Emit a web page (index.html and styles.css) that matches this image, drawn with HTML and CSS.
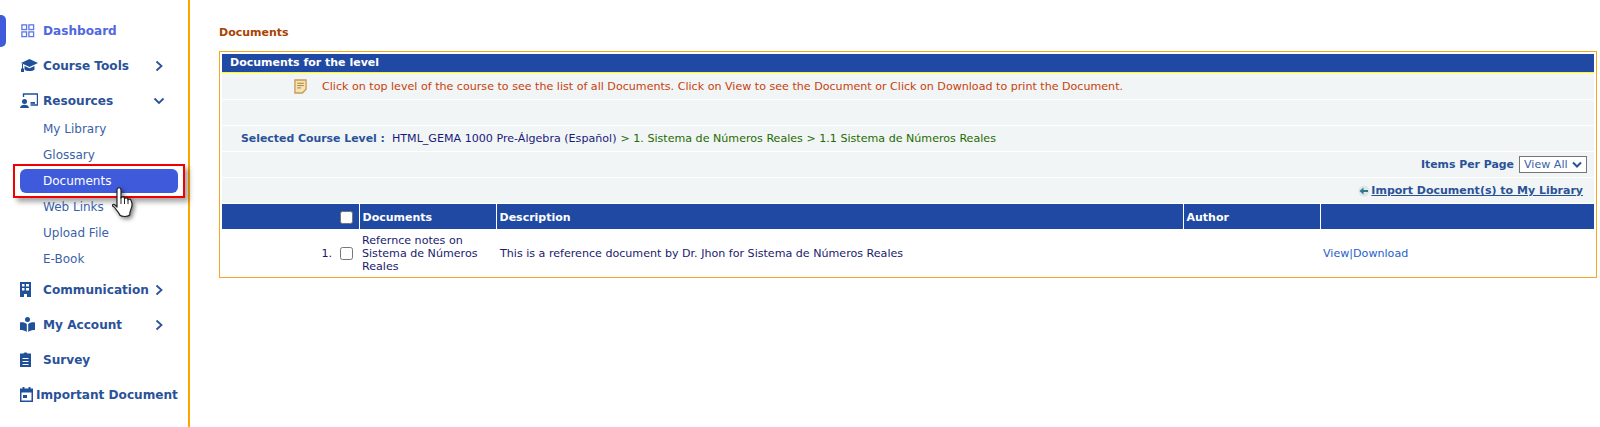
FILE: index.html
```html
<!DOCTYPE html>
<html lang="en">
<head>
  <meta charset="UTF-8">
  <meta name="viewport" content="width=device-width, initial-scale=1.0">
  <title>Documents</title>
  <link rel="stylesheet" href="styles.css">
</head>
<body>
  <div class="layout">
    <!-- Sidebar -->
    <nav class="sidebar">
      <div class="nav-item active-top">
        <span class="marker"></span>
        <svg class="nav-icon" viewBox="0 0 16 16"><g fill="none" stroke="#5f78e6" stroke-width="1.4"><rect x="2" y="2" width="5" height="5"/><rect x="9.5" y="2" width="5" height="5"/><rect x="2" y="9.5" width="5" height="5"/><rect x="9.5" y="9.5" width="5" height="5"/></g></svg>
        <span class="nav-label">Dashboard</span>
      </div>
      <div class="nav-item">
        <svg class="nav-icon wide" viewBox="0 0 18 15"><path fill="#20509a" d="M9.500 1 1 5l8.500 4L18 5z"/><path fill="#20509a" d="M4.500 8v3.500c1.500 2 8.500 2 10 0V8l-5 2.300z"/><path fill="none" stroke="#20509a" d="M2.500 6v5"/><rect x="1" y="10.500" width="3" height="3.500" fill="#20509a"/></svg>
        <span class="nav-label">Course Tools</span>
        <svg class="chevron" viewBox="0 0 12 12"><path d="M3.500 1.500 8.500 6l-5 4.500"/></svg>
      </div>
      <div class="nav-item">
        <svg class="nav-icon wide" viewBox="0 0 18 15"><circle cx="4.500" cy="8.500" r="2.500" fill="#20509a"/><path fill="#20509a" d="M0 15c0-4.500 9-4.500 9 0z"/><path fill="none" stroke="#20509a" stroke-width="1.400" d="M3.500 4V1h14v11h-7"/><rect x="10.500" y="9" width="4.500" height="1.800" fill="#20509a"/></svg>
        <span class="nav-label">Resources</span>
        <svg class="chevron down" viewBox="0 0 12 12"><path d="M1.500 3.500 6 8l4.500-4.500"/></svg>
      </div>
      <ul class="sub-menu">
        <li>My Library</li>
        <li>Glossary</li>
        <li class="current">
          <span class="pill">Documents</span>
          <span class="red-box"></span>
          <svg class="hand" viewBox="0 0 22 32"><path fill="#fff" stroke="#222" stroke-width="1.200" stroke-linejoin="round" d="M5 3C5 0 9 0 9 3V11c0-1.500 3.500-1.500 3.500 0v1c0-1.500 3.500-1.500 3.500 0v1c0-1.300 3-1.300 3 .5 1.500 3 1.500 6-.3 9.500-.6 1.500-1 3-1 5-2 2-8 2-10 0-.5-2.500-3.500-5-5.500-8C-.5 19 .5 16.500 2.500 17.500L5 20z"/><path fill="none" stroke="#222" d="M9 10v7M12.500 11v6M16 12v5"/></svg>
        </li>
        <li>Web Links</li>
        <li>Upload File</li>
        <li>E-Book</li>
      </ul>
      <div class="nav-item">
        <svg class="nav-icon" viewBox="0 0 15 15"><path fill="#20509a" fill-rule="evenodd" d="M0 0h11v15H7v-3H4v3H0zM2 2v2.500h2.500V2zm4 0v2.500h3V2zM2 6v2.500h2.500V6zm4 0v2.500h3V6z"/></svg>
        <span class="nav-label">Communication</span>
        <svg class="chevron" viewBox="0 0 12 12"><path d="M3.500 1.500 8.500 6l-5 4.500"/></svg>
      </div>
      <div class="nav-item">
        <svg class="nav-icon" viewBox="0 0 15 15"><circle cx="7.500" cy="2.500" r="2.500" fill="#20509a"/><path fill="#20509a" d="M0 5.500c2.500-.5 5 0 6.800 1.500v8C5 13.500 2.500 13 0 13zM15 5.500c-2.500-.5-5 0-6.800 1.500v8c1.800-1.500 4.300-2 6.800-2z"/></svg>
        <span class="nav-label">My Account</span>
        <svg class="chevron" viewBox="0 0 12 12"><path d="M3.500 1.500 8.500 6l-5 4.500"/></svg>
      </div>
      <div class="nav-item">
        <svg class="nav-icon" viewBox="0 0 15 15"><path fill="#20509a" fill-rule="evenodd" d="M3.500 1.500C3.500 0 7.500 0 7.500 1.500H11V15H0V1.500zM2.500 6v1h6V6zm0 3v1h6V9zm0 3v1h6v-1z"/></svg>
        <span class="nav-label">Survey</span>
      </div>
      <div class="nav-item important">
        <svg class="nav-icon narrow" viewBox="0 0 13 15"><path fill="#20509a" fill-rule="evenodd" d="M2.500 0h2v1.500h4V0h2v1.500H13V15H0V1.500h2.500zM1.500 5.500V13.500h10V5.500zM3 8h4v3H3z"/></svg>
        <span class="nav-label">Important Document</span>
      </div>
    </nav>

    <!-- Main content -->
    <main class="content">
      <h1 class="page-title">Documents</h1>
      <div class="panel">
        <div class="panel-head">Documents for the level</div>
        <div class="info-row note">
          <svg class="note-icon" viewBox="0 0 14 16"><path fill="#f6e3b4" stroke="#c79a55" stroke-width="1.400" d="M1 1h12v10l-4 4H1z"/><path fill="none" stroke="#a8782f" d="M3.500 4.500h7M3.500 7h7M3.500 9.500h4"/></svg>
          <span>Click on top level of the course to see the list of all Documents. Click on View to see the Document or Click on Download to print the Document.</span>
        </div>
        <div class="info-row"></div>
        <div class="info-row level">
          <b>Selected Course Level :</b>
          <span class="crumb-first">HTML_GEMA 1000 Pre-Álgebra (Español)</span>
          <span class="crumb">&gt; 1. Sistema de Números Reales &gt; 1.1 Sistema de Números Reales</span>
        </div>
        <div class="info-row right">
          <b>Items Per Page</b>
          <span class="select-box">View All
            <svg viewBox="0 0 10 8"><path d="M1 1.500 5 5.500l4-4"/></svg>
          </span>
        </div>
        <div class="info-row right import">
          <svg class="import-icon" viewBox="0 0 12 12"><circle cx="6" cy="6" r="5.500" fill="#dfe6ea"/><path fill="#2a7a8c" d="M1.500 6 5.500 2.500V5H10v2H5.500v2.500z"/></svg>
          <a class="import-link">Import Document(s) to My Library</a>
        </div>
        <table class="doc-table">
          <tr>
            <th class="col-check"><span class="check head-check"></span></th>
            <th class="col-doc">Documents</th>
            <th class="col-desc">Description</th>
            <th class="col-author">Author</th>
            <th></th>
          </tr>
          <tr>
            <td class="col-check"><span class="row-num">1.</span><span class="check"></span></td>
            <td class="doc-name">Refernce notes on Sistema de Números Reales</td>
            <td class="doc-desc">This is a reference document by Dr. Jhon for Sistema de Números Reales</td>
            <td></td>
            <td class="links"><a>View</a>|<a>Download</a></td>
          </tr>
        </table>
      </div>
    </main>
  </div>
</body>
</html>
```

FILE: styles.css
```css
* {
  box-sizing: border-box;
}
body {
  margin: 0;
  background-color: #fff;
  font-family: "DejaVu Sans", Verdana, sans-serif;
  font-size: 11px;
  height: 427px;
  overflow: hidden;
}
.layout {
  display: flex;
  height: 427px;
}

/* Sidebar */
.sidebar {
  width: 190px;
  flex: none;
  border-right: 2px solid #ffa500;
  padding-top: 13px;
}
.nav-item {
  display: flex;
  align-items: center;
  height: 35px;
  padding-left: 20px;
  position: relative;
  color: #2a5298;
  font-size: 12.100px;
  font-weight: bold;
}
.active-top {
  color: #4f67e0;
}
.marker {
  position: absolute;
  left: 0;
  top: 2px;
  width: 6px;
  height: 32px;
  background: #3f5bdc;
  border-radius: 0 5px 5px 0;
}
.nav-icon {
  width: 15px;
  height: 15px;
  flex: none;
  margin-right: 8px;
}
.nav-icon.wide {
  width: 18px;
  margin-right: 5px;
}
.nav-icon.narrow {
  width: 13px;
  margin-right: 3px;
}
.nav-label {
  white-space: nowrap;
}
.chevron {
  width: 12px;
  height: 12px;
  position: absolute;
  left: 153px;
  fill: none;
  stroke: #2a5298;
  stroke-width: 1.800;
}
.sub-menu {
  list-style: none;
  margin: -2px 0 0;
  padding: 0;
}
.sub-menu li {
  position: relative;
  height: 26px;
  line-height: 26px;
  padding-left: 43px;
  color: #3a5fa8;
  font-size: 12px;
}
.sub-menu li.current {
  color: #fff;
}
.pill {
  position: absolute;
  left: 20px;
  top: 1px;
  width: 158px;
  height: 24px;
  line-height: 24px;
  padding-left: 23px;
  background: #3f5bdc;
  border-radius: 6px;
}
.red-box {
  position: absolute;
  left: 13px;
  top: -4px;
  width: 172px;
  height: 34px;
  border: 2px solid #f00000;
  box-shadow: 4px 4px 5px rgba(0, 0, 0, 0.35);
}
.hand {
  position: absolute;
  left: 112px;
  top: 19px;
  width: 22px;
  height: 32px;
  filter: drop-shadow(2px 2px 2px rgba(0, 0, 0, 0.5));
}

/* Main */
.content {
  flex: 1;
  padding: 0 3px 0 29px;
}
.page-title {
  margin: 26px 0 11px;
  font-size: 11px;
  line-height: 14px;
  color: #a84300;
}
.panel {
  border: 1px solid #f5a623;
  padding: 2px;
  height: 227px;
}
.panel-head {
  height: 19px;
  line-height: 18px;
  padding-left: 8px;
  background: #1f49a2;
  border-bottom: 1px solid #ffff00;
  color: #fff;
  font-weight: bold;
  font-size: 11px;
}
.info-row {
  display: flex;
  align-items: center;
  height: 25px;
  margin-bottom: 1px;
  background: #f1f5f6;
  font-size: 11.100px;
}
.info-row b {
  font-size: 10.900px;
}
.note {
  height: 26px;
  color: #c8410b;
  padding-left: 72px;
}
.note-icon {
  width: 13px;
  height: 15px;
  margin-right: 15px;
}
.level {
  padding-left: 19px;
  color: #1a1a7a;
}
.level b {
  color: #2a5298;
  margin-right: 7px;
}
.crumb-first {
  margin-right: 4px;
}
.crumb {
  color: #1f6b00;
}
.right {
  justify-content: flex-end;
  padding-right: 7px;
}
.right b {
  color: #2a5298;
  margin-right: 5px;
}
.select-box {
  display: flex;
  align-items: center;
  justify-content: space-between;
  width: 68px;
  height: 17px;
  padding: 0 4px;
  border: 1px solid #767676;
  background: #fff;
  color: #3a5fa8;
}
.select-box svg {
  width: 10px;
  height: 8px;
  fill: none;
  stroke: #2a5298;
  stroke-width: 2;
}
.import {
  padding-right: 11px;
}
.import-icon {
  width: 12px;
  height: 12px;
  margin-right: 1px;
}
.import-link {
  color: #2a5298;
  font-weight: bold;
  font-size: 11px;
  text-decoration: underline;
}
.doc-table {
  width: 100%;
  border-collapse: collapse;
  table-layout: fixed;
}
.doc-table th {
  height: 25px;
  background: #1f49a2;
  color: #fff;
  text-align: left;
  padding: 2px 3px 0;
  border-right: 1px solid #fff;
  font-size: 11px;
}
.doc-table th:last-child {
  border-right: 0;
}
.doc-table td {
  height: 47px;
  padding: 2px 3px 0;
  color: #1a1a6e;
  font-size: 11.100px;
  line-height: 13px;
}
.col-check {
  width: 137px;
}
.doc-table th.col-check,
.doc-table td.col-check {
  text-align: right;
  padding-right: 6px;
}
.col-doc {
  width: 137px;
}
.col-desc {
  width: 687px;
}
.col-author {
  width: 137px;
}
.doc-table .doc-desc {
  padding-left: 4px;
}
.check {
  display: inline-block;
  width: 13px;
  height: 13px;
  border: 1px solid #767676;
  border-radius: 2.500px;
  background: #fff;
  vertical-align: middle;
}
.row-num {
  margin-right: 8px;
  vertical-align: middle;
}
.doc-table .links {
  color: #1f5fc8;
}
```
